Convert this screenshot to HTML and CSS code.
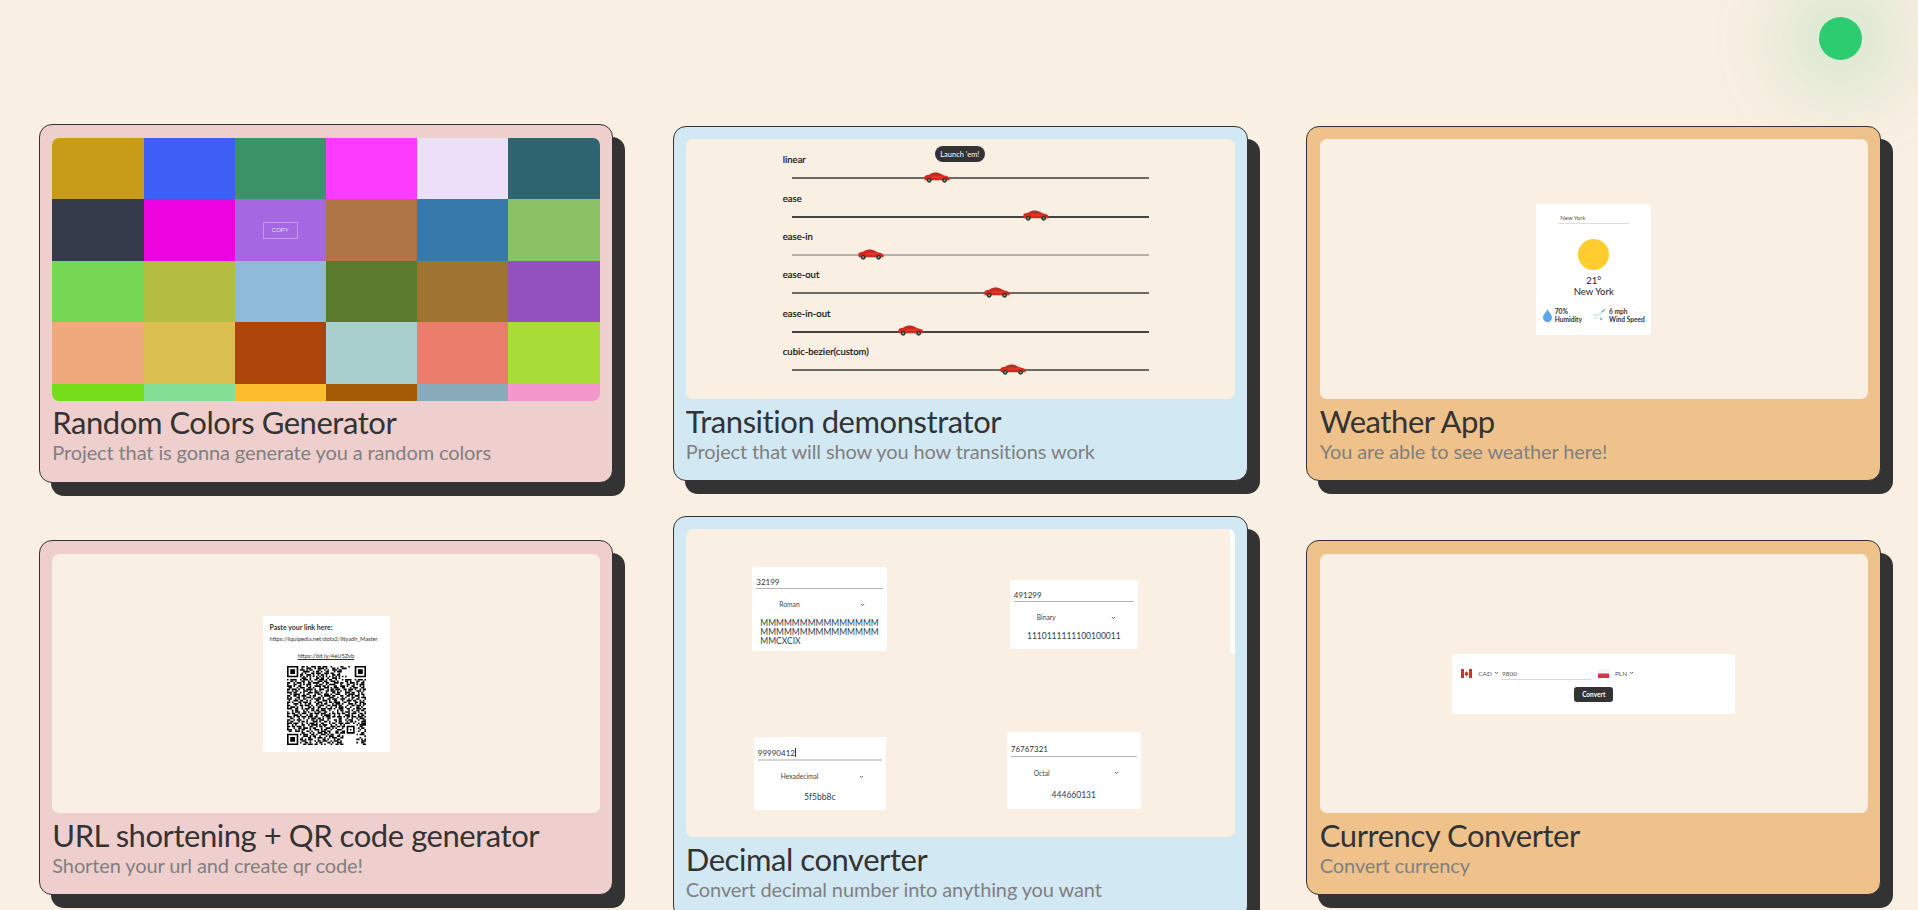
FILE: index.html
```html
<!DOCTYPE html>
<html lang="en">
<head>
<meta charset="utf-8">
<title>Projects</title>
<link rel="stylesheet" href="styles.css">
</head>
<body>
<svg class="defs" width="0" height="0" aria-hidden="true">
  <symbol id="car" viewBox="0 0 26 11">
    <path fill="#d5291f" d="M.5 4.500C1 3.500 3 3 5.500 2.500 8 .8 11 .3 14 .8 16 1.200 18 2.500 19.500 3.300 22.500 3.800 25 4.500 25.800 6.500L25.500 8.200H1L.3 7Z"/>
    <path fill="#8e3d36" d="M7.500 2.600C9.500 1.300 12 1.100 13.500 1.400L16.500 3Z"/>
    <path fill="none" stroke="#f0625a" stroke-width=".5" d="M8 5H19"/>
    <circle cx="5.200" cy="8.300" r="2.400" fill="#26352a"/>
    <circle cx="20.600" cy="8.300" r="2.400" fill="#26352a"/>
    <circle cx="5.200" cy="8.300" r="1" fill="#8da08f"/>
    <circle cx="20.600" cy="8.300" r="1" fill="#8da08f"/>
  </symbol>
  <symbol id="chev" viewBox="0 0 6 4">
    <path fill="none" stroke="#444" stroke-width="1" d="M1 1 3 3 5 1"/>
  </symbol>
</svg>

<header class="top">
  <span class="status-dot"></span>
</header>

<main class="grid">

  <article class="card first pink tall">
    <div class="preview colors">
      <div class="swatch" style="background:#c89c17"></div>
      <div class="swatch" style="background:#3d5ff5"></div>
      <div class="swatch" style="background:#3c9368"></div>
      <div class="swatch" style="background:#fd3bfc"></div>
      <div class="swatch" style="background:#ecdff8"></div>
      <div class="swatch" style="background:#2d6570"></div>
      <div class="swatch" style="background:#353b4b"></div>
      <div class="swatch" style="background:#ee04de"></div>
      <div class="swatch" style="background:#a667e2"><span class="copy">COPY</span></div>
      <div class="swatch" style="background:#b07648"></div>
      <div class="swatch" style="background:#3879ab"></div>
      <div class="swatch" style="background:#8bc265"></div>
      <div class="swatch" style="background:#76d755"></div>
      <div class="swatch" style="background:#b4bd42"></div>
      <div class="swatch" style="background:#8fbbd9"></div>
      <div class="swatch" style="background:#5c7a2e"></div>
      <div class="swatch" style="background:#9f7430"></div>
      <div class="swatch" style="background:#9350bf"></div>
      <div class="swatch" style="background:#efa97c"></div>
      <div class="swatch" style="background:#dcbf51"></div>
      <div class="swatch" style="background:#ad440a"></div>
      <div class="swatch" style="background:#a8cfcd"></div>
      <div class="swatch" style="background:#ea7c6b"></div>
      <div class="swatch" style="background:#a8dd38"></div>
      <div class="swatch" style="background:#76dd1b"></div>
      <div class="swatch" style="background:#84de93"></div>
      <div class="swatch" style="background:#fbbd2e"></div>
      <div class="swatch" style="background:#a55b05"></div>
      <div class="swatch" style="background:#8aabbc"></div>
      <div class="swatch" style="background:#f396cb"></div>
    </div>
    <h2 class="title">Random Colors Generator</h2>
    <p class="desc">Project that is gonna generate you a random colors</p>
  </article>

  <article class="card blue">
    <div class="preview lanes">
      <button class="launch">Launch 'em!</button>
      <div class="lane"><div class="lane-label">linear</div><div class="track track-mid"><svg class="car" style="left:37%"><use href="#car"/></svg></div></div>
      <div class="lane"><div class="lane-label">ease</div><div class="track track-dark"><svg class="car" style="left:64.7%"><use href="#car"/></svg></div></div>
      <div class="lane"><div class="lane-label">ease-in</div><div class="track track-light"><svg class="car" style="left:18.5%"><use href="#car"/></svg></div></div>
      <div class="lane"><div class="lane-label">ease-out</div><div class="track track-mid"><svg class="car" style="left:53.8%"><use href="#car"/></svg></div></div>
      <div class="lane"><div class="lane-label">ease-in-out</div><div class="track track-dark"><svg class="car" style="left:29.7%"><use href="#car"/></svg></div></div>
      <div class="lane"><div class="lane-label">cubic-bezier(custom)</div><div class="track track-mid"><svg class="car" style="left:58.3%"><use href="#car"/></svg></div></div>
    </div>
    <h2 class="title">Transition demonstrator</h2>
    <p class="desc">Project that will show you how transitions work</p>
  </article>

  <article class="card orange">
    <div class="preview center">
      <div class="weather">
        <div class="weather-input">New York</div>
        <div class="sun"></div>
        <div class="temp">21°</div>
        <div class="city">New York</div>
        <div class="weather-stats">
          <div class="stat">
            <svg class="drop" viewBox="0 0 9 13"><path fill="#5aa6e8" d="M4.500 0C5.500 3 9 5.600 9 8.600A4.400 4.400 0 0 1 0 8.600C0 5.600 3.500 3 4.500 0Z"/></svg>
            <div class="stat-text">70%<br>Humidity</div>
          </div>
          <div class="stat">
            <svg class="wind" viewBox="0 0 13 12"><path fill="none" stroke="#cfe3f2" stroke-width="1.500" d="M0 6H5C8 6 8 3 10 2M1 9H4"/><path fill="none" stroke="#62add6" stroke-width="1.300" d="M9 3 12 .5M7 9 9 11"/></svg>
            <div class="stat-text">6 mph<br>Wind Speed</div>
          </div>
        </div>
      </div>
    </div>
    <h2 class="title">Weather App</h2>
    <p class="desc">You are able to see weather here!</p>
  </article>

  <article class="card first low pink">
    <div class="preview center">
      <div class="qr-panel">
        <div class="qr-head">Paste your link here:</div>
        <div class="qr-url">https://liquipedia.net/dota2/Iltyadh_Master</div>
        <div class="qr-short">https://bit.ly/4eU5Zvb</div>
        <svg class="qr" viewBox="0 0 49 49">
          <g fill="none" stroke="#000">
            <path d="M0 .5h49" stroke-dasharray="0 9 2 1 1 2 3 1 2 1 3 2 1 5 2 3 1 2"/>
            <path d="M0 1.500h49" stroke-dasharray="0 9 1 2 3 2 1 1 4 1 1 3 2 1 1 2 3 1"/>
            <path d="M0 2.500h49" stroke-dasharray="0 8 3 1 1 1 2 3 2 2 1 1 1 2 3 1 2 1"/>
            <path d="M0 3.500h49" stroke-dasharray="0 10 4 2 1 1 2 1 1 2 2 3 1 1 3 2"/>
            <path d="M0 4.500h49" stroke-dasharray="0 9 1 1 1 3 2 1 3 2 3 1 2 3 1 1"/>
            <path d="M0 5.500h49" stroke-dasharray="0 8 2 2 3 1 1 2 1 1 2 1 1 3 2 1 2 2"/>
            <path d="M0 6.500h49" stroke-dasharray="0 8 1 1 1 1 1 1 1 1 1 1 1 1 1 1 1 1 1 1 1 1 1 1 1 1 1 1 1 1 1 1"/>
            <path d="M0 7.500h49" stroke-dasharray="0 9 3 2 1 3 2 1 2 2 1 2 3 1 1 3"/>
            <path d="M0 8.500h49" stroke-dasharray="1 1 4 2 1 1 3 1 1 2 2 1 3 1 1 1 2 2 1 3"/>
            <path d="M0 9.500h49" stroke-dasharray="0 2 2 1 1 3 2 2 1 1 1 3 3 1 2 2 3 1 1 2"/>
            <path d="M0 10.500h49" stroke-dasharray="2 2 1 1 3 1 1 2 2 1 4 2 1 1 2 3 3 1"/>
            <path d="M0 11.500h49" stroke-dasharray="1 3 2 2 1 1 1 1 3 3 1 1 2 2 1 1 4 3"/>
            <path d="M0 12.500h49" stroke-dasharray="3 1 1 2 2 3 1 1 1 2 4 1 2 1 1 3 2 2"/>
            <path d="M0 13.500h49" stroke-dasharray="0 1 2 3 1 1 3 2 2 1 1 3 1 2 3 1 1 1 3 1"/>
            <path d="M0 14.500h49" stroke-dasharray="2 1 3 1 1 2 1 1 4 1 1 2 3 2 1 1 2 1 3 2"/>
            <path d="M0 15.500h49" stroke-dasharray="1 2 1 1 2 3 3 1 1 2 2 1 1 3 2 1 3 1 1 1"/>
            <path d="M0 16.500h49" stroke-dasharray="3 1 2 2 1 1 1 2 3 1 3 1 1 2 1 3 2 1 2 3"/>
            <path d="M0 17.500h49" stroke-dasharray="0 2 1 1 4 2 1 1 2 3 1 1 2 2 3 1 1 2 3 1"/>
            <path d="M0 18.500h49" stroke-dasharray="2 2 2 1 1 1 3 2 1 1 2 3 1 1 4 1 2 3"/>
            <path d="M0 19.500h49" stroke-dasharray="1 1 1 3 2 2 1 1 3 1 1 2 2 1 1 3 3 2 1 2"/>
            <path d="M0 20.500h49" stroke-dasharray="3 2 1 1 1 2 2 3 1 1 4 1 1 2 2 1 3 2"/>
            <path d="M0 21.500h49" stroke-dasharray="0 1 1 2 3 1 2 2 1 1 1 3 2 2 3 1 1 2 2 2"/>
            <path d="M0 22.500h49" stroke-dasharray="2 1 1 3 2 1 3 1 1 2 1 1 3 2 1 1 2 1 4 2"/>
            <path d="M0 23.500h49" stroke-dasharray="1 3 3 1 1 2 1 1 2 3 2 1 1 1 2 3 1 1 3 1"/>
            <path d="M0 24.500h49" stroke-dasharray="2 3 1 2 2 1 3 1 1 2 1 1 3 2 2 1 3 1"/>
            <path d="M0 25.500h49" stroke-dasharray="1 1 3 1 1 2 1 3 2 1 1 2 2 3 1 2 1 2"/>
            <path d="M0 26.500h49" stroke-dasharray="3 2 2 2 1 1 3 1 2 2 1 1 3 1 3 1 1 2"/>
            <path d="M0 27.500h49" stroke-dasharray="0 3 1 1 2 3 1 1 1 2 2 1 2 1 3 2 1 1"/>
            <path d="M0 28.500h49" stroke-dasharray="1 2 1 1 3 2 2 1 1 3 1 1 2 2 2 3 1 2"/>
            <path d="M0 29.500h49" stroke-dasharray="2 1 2 2 1 1 3 2 2 1 3 1 3 2 1 1 2 1"/>
            <path d="M0 30.500h49" stroke-dasharray="1 3 3 1 1 3 1 1 2 2 1 2 1 1 4 2 1 2"/>
            <path d="M0 31.500h49" stroke-dasharray="3 1 1 1 2 1 3 1 3 1 2 3 1 1 3 1 2 1"/>
            <path d="M0 32.500h49" stroke-dasharray="0 2 2 3 1 2 1 2 1 1 3 1 2 1 1 2 2 3"/>
            <path d="M0 33.500h49" stroke-dasharray="2 2 1 1 3 3 1 2 2 1 1 1 3 2 1 3 2 1"/>
            <path d="M0 34.500h49" stroke-dasharray="1 1 2 3 1 1 2 1 1 3 3 1 1 2 2 1 1 3"/>
            <path d="M0 35.500h49" stroke-dasharray="3 1 3 2 1 2 1 1 3 1 1 2 2 3 1 1 2 2"/>
            <path d="M0 36.500h49" stroke-dasharray="1 2 1 1 1 3 2 2 1 1 4 1 1 1 3 2 1 2"/>
            <path d="M0 37.500h49" stroke-dasharray="2 1 2 1 3 1 1 3 2 2 1 1 2 1 1 3 3 1"/>
            <path d="M0 38.500h49" stroke-dasharray="1 3 1 2 2 1 3 1 1 1 2 3 1 2 3 1 1 1"/>
            <path d="M0 39.500h49" stroke-dasharray="3 2 1 1 1 1 2 3 1 2 3 1 1 1 2 2 1 3"/>
            <path d="M0 40.500h49" stroke-dasharray="0 1 2 2 3 1 1 2 2 1 1 3 1 1 3 1 2 2"/>
            <path d="M0 41.500h49" stroke-dasharray="0 9 2 3 1 1 1 2 3 1 2 1 1 3 2 1 3 1"/>
            <path d="M0 42.500h49" stroke-dasharray="0 8 1 1 3 2 2 1 1 2 3 1 1 1 2 3 1 2"/>
            <path d="M0 43.500h49" stroke-dasharray="0 10 3 1 1 1 2 2 1 3 1 1 3 2 2 1 1 3"/>
            <path d="M0 44.500h49" stroke-dasharray="0 9 1 3 2 2 1 1 3 1 1 2 1 1 3 2 2 1"/>
            <path d="M0 45.500h49" stroke-dasharray="0 8 2 1 1 1 3 3 1 2 2 1 1 3 1 1 2 2"/>
            <path d="M0 46.500h49" stroke-dasharray="0 9 3 2 1 2 1 1 2 1 3 2 1 1 3 1 1 3"/>
            <path d="M0 47.500h49" stroke-dasharray="0 8 1 2 2 1 1 3 1 1 2 3 2 1 1 2 3 1"/>
            <path d="M0 48.500h49" stroke-dasharray="0 10 2 1 3 1 2 2 1 1 1 3 1 2 2 1 2 2"/>
          </g>
          <path fill="#fff" d="M0 0h8v8H0ZM41 0h8v8H41ZM0 41h8v8H0ZM36 36h7v7h-7Z"/>
          <path fill="#000" fill-rule="evenodd" d="M0 0h7v7H0ZM1 1v5h5V1ZM2 2h3v3H2ZM42 0h7v7h-7ZM43 1v5h5V1ZM44 2h3v3h-3ZM0 42h7v7H0ZM1 43v5h5v-5ZM2 44h3v3H2ZM37 37h5v5h-5ZM38 38v3h3v-3ZM39 39h1v1h-1Z"/>
        </svg>
      </div>
    </div>
    <h2 class="title">URL shortening + QR code generator</h2>
    <p class="desc">Shorten your url and create qr code!</p>
  </article>

  <article class="card blue large">
    <div class="preview decimal">
      <div class="conv conv-a">
        <div class="conv-input">32199</div>
        <div class="conv-select"><span>Roman</span><svg class="chev"><use href="#chev"/></svg></div>
        <div class="conv-result">MMMMMMMMMMMMMMM<br>MMMMMMMMMMMMMMM<br>MMCXCIX</div>
      </div>
      <div class="conv conv-b">
        <div class="conv-input">491299</div>
        <div class="conv-select"><span>Binary</span><svg class="chev"><use href="#chev"/></svg></div>
        <div class="conv-result">1110111111100100011</div>
      </div>
      <div class="conv conv-c">
        <div class="conv-input">99990412<span class="caret"></span></div>
        <div class="conv-select"><span>Hexadecimal</span><svg class="chev"><use href="#chev"/></svg></div>
        <div class="conv-result">5f5bb8c</div>
      </div>
      <div class="conv conv-d">
        <div class="conv-input">76767321</div>
        <div class="conv-select"><span>Octal</span><svg class="chev"><use href="#chev"/></svg></div>
        <div class="conv-result">444660131</div>
      </div>
      <div class="scroll-strip"></div>
    </div>
    <h2 class="title">Decimal converter</h2>
    <p class="desc">Convert decimal number into anything you want</p>
  </article>

  <article class="card low orange">
    <div class="preview center">
      <div class="currency">
        <div class="currency-row">
          <svg class="flag" viewBox="0 0 11 9"><path fill="#fff" d="M0 0h11v9H0Z"/><path fill="#c8342a" d="M0 0h3v9H0ZM8 0h3v9H8ZM5.500 2 6.300 3.600 7.400 3.300 7 5 7.700 5.400 5.800 6.800V7.400H5.200V6.800L3.300 5.400 4 5 3.600 3.300 4.700 3.600Z"/></svg>
          <span class="code">CAD</span><svg class="chev chev-tight"><use href="#chev"/></svg>
          <div class="amount">9800</div>
          <svg class="flag flag-pl" viewBox="0 0 11 9"><path fill="#f5f5f5" d="M0 0h11v4.500H0Z"/><path fill="#d6344a" d="M0 4.500h11V9H0Z"/></svg>
          <span class="code">PLN</span><svg class="chev"><use href="#chev"/></svg>
        </div>
        <button class="convert">Convert</button>
      </div>
    </div>
    <h2 class="title">Currency Converter</h2>
    <p class="desc">Convert currency</p>
  </article>

</main>
</body>
</html>
```

FILE: styles.css
```css
* { box-sizing: border-box; }

html, body {
  margin: 0;
  height: 910px;
  overflow: hidden;
}

body {
  background: #faefe3;
  color: #333;
  font-family: Lato, "Noto Sans", sans-serif;
}

.defs { position: absolute; }

.top {
  display: flex;
  justify-content: flex-end;
  height: 124px;
  padding: 17px 56px 0 0;
}

.status-dot {
  width: 43px;
  height: 43px;
  border-radius: 50%;
  background: #2ecc71;
  box-shadow: 0 0 70px 40px rgba(46, 204, 113, 0.17);
}

.grid {
  display: grid;
  grid-template-columns: 575.5px 575.5px 575px;
  column-gap: 58px;
  row-gap: 33px;
  align-items: center;
  padding-left: 39px;
}

.card {
  height: 355px;
  width: 575.5px;
  padding: 12.300px 12.300px 0;
  border: 1px solid #333;
  border-radius: 13px;
  box-shadow: 12px 13px 0 #333;
}

.first { width: 574px; }

.pink { background: #efcfcd; }
.blue { background: #d2e9f4; }
.orange {
  width: 575px;
  padding-left: 12.800px;
  background: #f0c28b;
}

.tall { height: 359px; padding-top: 13px; }
.large { height: 403px; }
.low { padding-top: 13px; }

.preview {
  position: relative;
  height: 260px;
  border-radius: 7px;
  background: #faefe3;
  overflow: hidden;
}

.tall .preview { height: 262.700px; }
.large .preview { height: 308px; }
.low .preview { height: 259.300px; }

.center {
  display: flex;
  align-items: center;
  justify-content: center;
}

.title {
  margin: 4px 0 0;
  font-size: 31px;
  font-weight: 400;
  letter-spacing: -0.45px;
  line-height: 36px;
}

.tall .title { margin-top: 3px; }

.desc {
  margin: 0;
  color: #808080;
  font-size: 20px;
  letter-spacing: -0.12px;
  line-height: 24px;
}

/* Random colours */
.colors {
  display: grid;
  grid-template-columns: repeat(6, 1fr);
  grid-auto-rows: 61.400px;
}

.swatch {
  display: flex;
  align-items: center;
  justify-content: center;
}

.copy {
  width: 35px;
  height: 17px;
  border: 1px solid rgba(255, 255, 255, 0.35);
  color: rgba(255, 255, 255, 0.8);
  font-family: "Liberation Sans", sans-serif;
  font-size: 6px;
  line-height: 15px;
  text-align: center;
}

/* Transition demo */
.lanes { padding: 15px 0 0 97px; }

.launch {
  position: absolute;
  top: 7px;
  left: 249px;
  width: 50px;
  height: 16px;
  padding: 0;
  border: 0;
  border-radius: 8px;
  background: #333;
  color: #fff;
  font-family: Lato, sans-serif;
  font-size: 7.500px;
}

.lane { height: 38.400px; }

.lane-label {
  color: #111;
  font-size: 9.500px;
  line-height: 12px;
  -webkit-text-stroke: 0.2px #111;
}

.track {
  position: relative;
  width: 357px;
  height: 2px;
  margin: 11px 0 0 9px;
}

.track-dark { background: #444; }
.track-mid { background: #6c6a66; }
.track-light { background: #b5b0a8; }

.car {
  position: absolute;
  top: -5.500px;
  width: 26px;
  height: 11px;
}

/* Weather */
.weather {
  display: flex;
  flex-direction: column;
  align-items: center;
  width: 115px;
  height: 131px;
  padding-top: 9px;
  border-radius: 2px;
  background: #fff;
}

.weather-input {
  width: 71px;
  height: 11px;
  padding-left: 2px;
  border-bottom: 1px solid #ddd;
  color: #555;
  font-size: 6px;
  line-height: 9px;
}

.sun {
  width: 31px;
  height: 31px;
  margin-top: 15px;
  border-radius: 50%;
  background: #ffcd2e;
}

.temp, .city {
  color: #222;
  font-size: 9.500px;
  line-height: 11px;
}

.temp { margin-top: 5px; }

.weather-stats {
  display: flex;
  gap: 11px;
  margin-top: 10px;
}

.stat {
  display: flex;
  align-items: center;
  gap: 3px;
}

.stat-text {
  color: #333;
  font-size: 6.600px;
  font-weight: 700;
  line-height: 8.500px;
}

.drop { width: 9px; height: 13px; }
.wind { width: 13px; height: 12px; }

/* QR */
.qr-panel {
  display: flex;
  flex-direction: column;
  width: 127px;
  height: 136px;
  padding: 7px 7px 0;
  border-radius: 2px;
  background: #fff;
}

.qr-head {
  font-size: 7px;
  font-weight: 700;
  line-height: 8px;
}

.qr-url {
  margin-top: 4px;
  font-size: 5.700px;
  line-height: 8px;
  white-space: nowrap;
}

.qr-short {
  margin-top: 9px;
  font-size: 5.800px;
  line-height: 8px;
  text-align: center;
  text-decoration: underline;
}

.qr {
  display: block;
  flex: none;
  width: 79px;
  height: 79px;
  margin: 6px 0 0 17px;
}

/* Decimal converter */
.decimal {
  display: grid;
  grid-template-columns: 254px 254px;
  grid-template-rows: 165px auto;
  justify-items: center;
  align-items: start;
  padding: 38px 0 0 7px;
}

.scroll-strip {
  position: absolute;
  top: 0;
  right: 0;
  width: 5px;
  height: 124px;
  background: #fff;
}

.conv {
  display: flex;
  flex-direction: column;
  padding: 0 4px;
  border-radius: 2px;
  background: #fff;
}

.conv-a { width: 135px; height: 84px; }
.conv-b { width: 128px; height: 69px; margin-top: 13px; }
.conv-c { width: 132px; height: 73px; margin-top: 5px; }
.conv-d { width: 134px; height: 77px; }

.conv-input {
  height: 22px;
  padding-top: 10px;
  border-bottom: 1px solid #b5b5b5;
  font-size: 8px;
  line-height: 10px;
}

.conv-c .conv-input { height: 24px; padding-top: 11px; border-bottom: 2px solid #d5d5d5; }
.conv-d .conv-input { height: 25px; padding-top: 12px; }

.caret {
  display: inline-block;
  width: 1px;
  height: 9px;
  vertical-align: -1px;
  background: #333;
}

.conv-select {
  display: flex;
  align-items: center;
  justify-content: space-between;
  height: 30px;
  padding: 0 18px 0 23px;
  color: #444;
  font-size: 6.700px;
}

.conv-d .conv-select { height: 31px; }

.chev { width: 5px; height: 3.500px; }

.conv-result {
  color: #2c3e50;
  font-size: 8.500px;
  line-height: 9px;
  text-align: center;
}

.conv-a .conv-result {
  padding-left: 4px;
  text-align: left;
}

.conv-c .conv-result { margin-top: 2px; }
.conv-d .conv-result { margin-top: 3px; }

/* Currency */
.currency {
  display: flex;
  flex-direction: column;
  align-items: center;
  width: 283px;
  height: 60px;
  padding: 14px 9px 0;
  border-radius: 3px;
  background: #fff;
}

.currency-row {
  display: flex;
  align-items: center;
  align-self: stretch;
  height: 11px;
  color: #555;
  font-size: 6.500px;
}

.flag { flex: none; width: 11px; height: 9px; }
.flag-pl { margin-left: 7px; }

.code { margin: 0 2px 0 6px; }
.chev-tight { margin-right: 2px; }

.amount {
  width: 90px;
  height: 12px;
  margin-top: 1px;
  padding-left: 1px;
  border-bottom: 1px solid #d8d8d8;
  line-height: 11px;
}

.convert {
  width: 39px;
  height: 15px;
  margin-top: 8px;
  padding: 0;
  border: 0;
  border-radius: 3px;
  background: #333;
  color: #fff;
  font-family: Lato, sans-serif;
  font-size: 6.500px;
  font-weight: 700;
}
```
